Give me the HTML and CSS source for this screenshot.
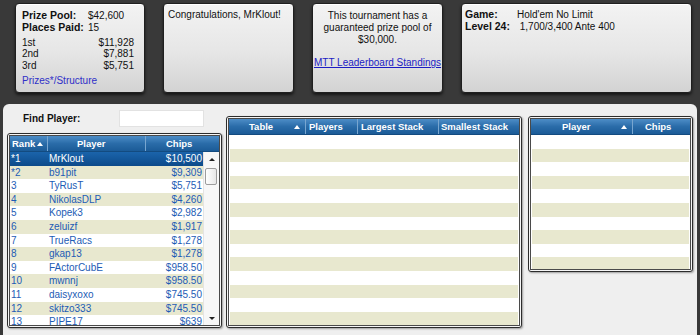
FILE: index.html
```html
<!DOCTYPE html>
<html lang="en">
<head>
  <meta charset="UTF-8" />
  <title>Tournament Lobby</title>
  <link rel="stylesheet" href="styles.css">
</head>
<body>

  <div class="top">
    <div class="card card-prize">
      <div class="kv"><b>Prize Pool:</b><span>$42,600</span></div>
      <div class="kv"><b>Places Paid:</b><span>15</span></div>
      <div class="places">
        <div class="place"><span>1st</span><span>$11,928</span></div>
        <div class="place"><span>2nd</span><span>$7,881</span></div>
        <div class="place"><span>3rd</span><span>$5,751</span></div>
      </div>
      <a class="prize-link" href="#">Prizes*/Structure</a>
    </div>
    <div class="card card-congrats">Congratulations, MrKlout!</div>
    <div class="card card-guarantee">
      This tournament has a<br>guaranteed prize pool of<br>$30,000.
      <a class="board-link" href="#">MTT Leaderboard Standings</a>
    </div>
    <div class="card card-game">
      <div class="kv-game"><b>Game:</b><span>Hold'em No Limit</span></div>
      <div class="kv-game"><b>Level 24:</b><span>&nbsp;1,700/3,400 Ante 400</span></div>
    </div>
  </div>

  <div class="panel">
    <div class="left-col">
      <div class="find">
        <span class="find-label">Find Player:</span>
        <input class="find-input" type="text" />
      </div>
      <div class="frame frame-left">
        <div class="grid-box">
          <div class="head">
            <div class="hc lh-rank">Rank<span class="arrow"></span></div>
            <div class="hc lh-player">Player</div>
            <div class="hc lh-chips last">Chips</div>
          </div>
          <div class="list">
            <div class="rows" id="player-rows"></div>
            <div class="scroll">
              <div class="sb-btn sb-up"></div>
              <div class="sb-track"><div class="sb-thumb"></div></div>
              <div class="sb-btn sb-down"></div>
            </div>
          </div>
        </div>
      </div>
    </div>

    <div class="frame frame-mid">
      <div class="grid-box">
        <div class="head">
          <div class="hc mh-table">Table<span class="arrow arrow-end"></span></div>
          <div class="hc mh-players">Players</div>
          <div class="hc mh-largest">Largest Stack</div>
          <div class="hc mh-smallest last">Smallest Stack</div>
        </div>
        <div class="stripes" id="table-rows"></div>
      </div>
    </div>

    <div class="frame frame-right">
      <div class="grid-box">
        <div class="head">
          <div class="hc rh-player">Player<span class="arrow arrow-end"></span></div>
          <div class="hc rh-chips last">Chips</div>
        </div>
        <div class="stripes" id="seat-rows"></div>
      </div>
    </div>
  </div>

  <script>
    const players = [
      ["*1", "MrKlout", "$10,500"],
      ["*2", "b91pit", "$9,309"],
      ["3", "TyRusT", "$5,751"],
      ["4", "NikolasDLP", "$4,260"],
      ["5", "Kopek3", "$2,982"],
      ["6", "zeluizf", "$1,917"],
      ["7", "TrueRacs", "$1,278"],
      ["8", "gkap13", "$1,278"],
      ["9", "FActorCubE", "$958.50"],
      ["10", "mwnnj", "$958.50"],
      ["11", "daisyxoxo", "$745.50"],
      ["12", "skitzo333", "$745.50"],
      ["13", "PIPE17", "$639"]
    ];

    const playerRows = document.getElementById("player-rows");
    players.forEach(function (p, i) {
      const cls = i === 0 ? "row sel" : "row";
      playerRows.innerHTML += `<div class='${cls}'><span class='c-rank'>${p[0]}</span><span class='c-player'>${p[1]}</span><span class='c-chips'>${p[2]}</span></div>`;
    });

    function emptyRows(id, count) {
      const box = document.getElementById(id);
      for (let i = 0; i < count; i++) {
        box.innerHTML += "<div class='stripe'></div>";
      }
    }
    emptyRows("table-rows", 14);
    emptyRows("seat-rows", 10);
  </script>

</body>
</html>
```

FILE: styles.css
```css
* {
  box-sizing: border-box;
}

body {
  margin: 0;
  height: 335px;
  overflow: hidden;
  display: flex;
  flex-direction: column;
  background-color: #393939;
  font-family: "Liberation Sans", Arial, sans-serif;
  font-size: 10px;
  color: #111;
}

/* top info cards */

.top {
  display: flex;
  gap: 18px;
  padding: 3px 0 0 15px;
}

.card {
  height: 90px;
  border: 1px solid #1f1f1f;
  border-radius: 4px;
  background: linear-gradient(#f3f3f3, #e6e6e6 55%, #d3d3d3);
  box-shadow: inset 0 1px 0 #fff, 0 2px 3px rgba(0, 0, 0, 0.6);
}

.card-prize {
  width: 130px;
  padding: 6px 0 0 6px;
  line-height: 11.5px;
}

.kv {
  display: grid;
  grid-template-columns: 66px auto;
}

.kv b {
  font-size: 10.5px;
}

.places {
  width: 112px;
  margin-top: 3.5px;
}

.place {
  display: flex;
  justify-content: space-between;
}

.prize-link {
  display: block;
  margin-top: 3.5px;
  color: #2f2fc8;
  text-decoration: none;
}

.card-congrats {
  width: 131px;
  padding: 5px 4px;
  line-height: 12px;
}

.card-guarantee {
  width: 131px;
  padding-top: 6px;
  text-align: center;
  line-height: 12px;
}

.board-link {
  display: block;
  margin-top: 11px;
  color: #1c1cc4;
  text-decoration: underline;
}

.card-game {
  width: 231px;
  padding: 5px 3px;
  line-height: 11.5px;
}

.kv-game {
  display: grid;
  grid-template-columns: 52px auto;
}

.kv-game b {
  font-size: 10.5px;
}

/* lower panel */

.panel {
  flex: 1;
  display: flex;
  align-items: flex-start;
  margin: 11px 3px 0 3px;
  padding: 6px 4px 0;
  background-color: #efefef;
  border-radius: 6px 6px 0 0;
}

.left-col {
  width: 215px;
}

.find {
  display: flex;
  align-items: center;
  height: 17px;
}

.find-label {
  width: 112px;
  padding-left: 16px;
  font-weight: bold;
}

.find-input {
  width: 85px;
  height: 17px;
  margin: 0;
  border: 1px solid #e2e2e2;
  background-color: #fff;
  outline: none;
}

.frame {
  display: flex;
  flex-direction: column;
  padding: 1px;
  border: 1px solid #2c2c2c;
  border-radius: 3px;
  background-color: #f6f6f6;
  box-shadow: 1px 1px 2px rgba(0, 0, 0, 0.35);
}

.frame-left {
  margin-top: 6px;
  height: 195px;
}

.frame-mid {
  width: 296px;
  height: 212px;
  margin: 6px 0 0 4px;
}

.frame-right {
  width: 165px;
  height: 156px;
  margin: 6px 0 0 6px;
}

.grid-box {
  flex: 1;
  display: flex;
  flex-direction: column;
  overflow: hidden;
  border: 1px solid #4a4a4a;
  background-color: #fff;
}

.head {
  display: flex;
  flex: none;
  height: 16px;
  background: linear-gradient(#4d8dc7, #2a6ca9 50%, #1b5b97);
  border-bottom: 1px solid #134b80;
  color: #fff;
  font-weight: bold;
  font-size: 9.5px;
}

.hc {
  display: flex;
  align-items: center;
  height: 100%;
  border-right: 1px solid #78a6d0;
}

.hc.last {
  flex: 1;
  border-right: none;
}

.arrow {
  width: 0;
  height: 0;
  margin-left: 2px;
  border-left: 3.5px solid transparent;
  border-right: 3.5px solid transparent;
  border-bottom: 4px solid #fff;
}

.arrow-end {
  margin-left: auto;
  margin-right: 5px;
}

.lh-rank {
  width: 38px;
  padding-left: 2px;
}

.lh-player {
  width: 98px;
  padding-left: 29px;
}

.lh-chips {
  padding-left: 20px;
}

.mh-table {
  width: 77px;
  padding-left: 20px;
}

.mh-players {
  width: 52px;
  padding-left: 3px;
}

.mh-largest {
  width: 81px;
  padding-left: 3px;
}

.mh-smallest {
  padding-left: 2px;
}

.rh-player {
  width: 102px;
  padding-left: 31px;
}

.rh-chips {
  padding-left: 12px;
}

/* player list */

.list {
  flex: 1;
  display: flex;
  overflow: hidden;
}

.rows {
  flex: 1;
  overflow: hidden;
}

.row {
  display: grid;
  grid-template-columns: 38px 98px 1fr;
  height: 13.6px;
  line-height: 13.6px;
  color: #1d5cb5;
  white-space: nowrap;
}

.row:nth-child(even) {
  background-color: #e8e8cf;
}

.row.sel {
  background: linear-gradient(#1b64ab, #0c4a8a);
  color: #fff;
}

.c-rank,
.c-player {
  padding-left: 1px;
}

.c-chips {
  text-align: right;
  padding-right: 1px;
}

.scroll {
  width: 16px;
  display: flex;
  flex-direction: column;
  background-color: #f7f7f7;
  border-left: 1px solid #e4e4e4;
}

.sb-btn {
  flex: none;
  height: 14px;
  display: flex;
  align-items: center;
  justify-content: center;
}

.sb-up::after,
.sb-down::after {
  content: "";
  width: 0;
  height: 0;
  border-left: 3px solid transparent;
  border-right: 3px solid transparent;
}

.sb-up::after {
  border-bottom: 3px solid #222;
}

.sb-down::after {
  border-top: 3px solid #222;
}

.sb-track {
  flex: 1;
}

.sb-thumb {
  height: 17px;
  margin: 2px 2px 0 1px;
  border: 1px solid #9c9c9c;
  border-radius: 2px;
  background: linear-gradient(90deg, #ffffff, #e6e6e6);
}

/* empty striped tables */

.stripes {
  flex: 1;
  overflow: hidden;
}

.stripe {
  height: 13.6px;
  margin: 0 1px;
}

.stripe:nth-child(even) {
  background-color: #e8e8cf;
}
```
